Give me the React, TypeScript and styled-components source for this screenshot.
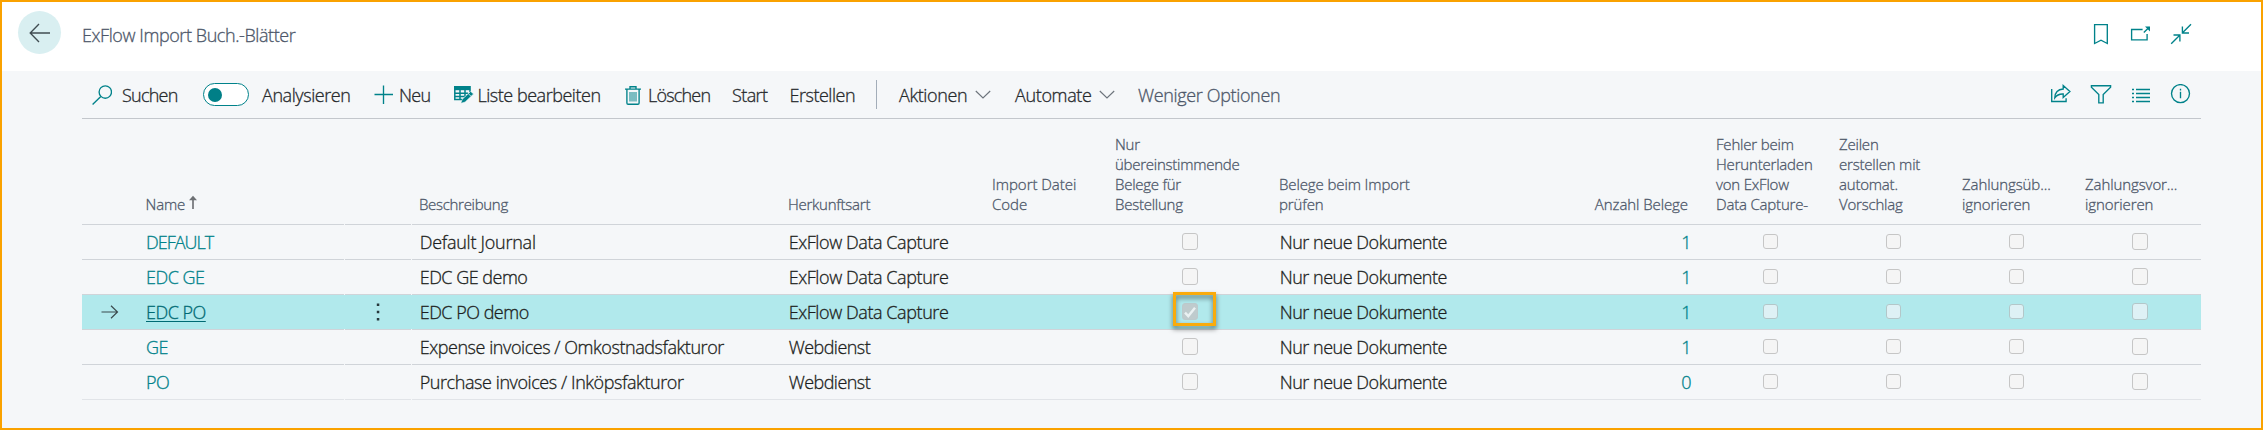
import React from 'react';
import styled, { createGlobalStyle, css } from 'styled-components';

const teal = '#00828a';
const ink = '#1c1e20';
const muted = '#4d5769';
const line = '#d0d4d9';

const GlobalStyle = createGlobalStyle`
  * { box-sizing: border-box; }
  body { margin: 0; background: #f5f7f9; }
`;

const Page = styled.div`
  height: 430px;
  border: 2px solid #faa200;
  background: #f5f7f9;
  font-family: 'Open Sans', 'Noto Sans', sans-serif;
  font-weight: 300;
  font-size: 18px;
  line-height: 34px;
  letter-spacing: -0.42px;
  color: ${ink};
  -webkit-text-stroke: 0.3px currentColor;
  white-space: nowrap;
  overflow: hidden;
`;

const Label = styled.span<{ $track?: number }>`
  ${p => p.$track !== undefined && css`letter-spacing: ${p.$track}px;`}
`;

/* ---------- header ---------- */

const Header = styled.header`
  display: flex;
  align-items: flex-start;
  height: 69px;
  padding: 0 60px 0 16px;
  background: #fff;
`;

const BackButton = styled.div`
  display: flex;
  align-items: center;
  justify-content: center;
  width: 43px;
  height: 43px;
  margin-top: 9px;
  border-radius: 50%;
  background: #d9eff1;
`;

const Title = styled.div`
  margin: 16px auto 0 21px;
  color: ${muted};
`;

const HeaderIcons = styled.div`
  display: flex;
  margin-top: 21px;
`;

const IconSlot = styled.div`
  display: flex;
  justify-content: center;
  width: 40px;
`;

const Icon = styled.svg<{ $color?: string }>`
  display: block;
  flex: none;
  fill: none;
  stroke: ${p => p.$color || teal};
  stroke-width: 1.35;
`;

/* ---------- toolbar ---------- */

const Toolbar = styled.nav`
  display: flex;
  align-items: center;
  height: 48px;
  margin: 0 60px 0 80px;
  padding-left: 10px;
  border-bottom: 1px solid #c3c7cc;
`;

const Command = styled.div<{ $width: number; $gap?: number; $muted?: boolean }>`
  display: flex;
  align-items: center;
  width: ${p => p.$width}px;
  gap: ${p => p.$gap || 0}px;
  color: ${p => (p.$muted ? muted : '#26292c')};
`;

const Toggle = styled.div`
  display: flex;
  align-items: center;
  width: 46px;
  height: 23px;
  padding-left: 4px;
  border: 1px solid ${teal};
  border-radius: 12px;
  background: #fff;
`;

const Knob = styled.div`
  width: 14px;
  height: 14px;
  border-radius: 50%;
  background: #007f87;
`;

const Divider = styled.div`
  width: 1px;
  height: 29px;
  margin-right: 22px;
  background: #a3adb9;
`;

const ToolbarIcons = styled.div`
  display: flex;
  margin-left: auto;
`;

/* ---------- table ---------- */

const columns = css`
  display: grid;
  grid-template-columns: 58px 205px 67px 369px 204px 123px 164px 308px 129px repeat(4, 123px);
`;

const Table = styled.div`
  width: 2119px;
  margin-left: 80px;
`;

const HeadRow = styled.div`
  ${columns}
  height: 106px;
`;

const HeadCell = styled.div<{ $right?: boolean; $notch?: boolean }>`
  display: flex;
  flex-direction: column;
  justify-content: flex-end;
  align-items: ${p => (p.$right ? 'flex-end' : 'flex-start')};
  padding: 0 ${p => (p.$right ? 21 : 0)}px 10px ${p => (p.$notch ? 5.5 : 7)}px;
  margin-right: ${p => (p.$notch ? 1 : 0)}px;
  border-bottom: 1px solid ${line};
  font-size: 15px;
  line-height: 20px;
  letter-spacing: -0.18px;
  color: ${muted};
`;

const SortLabel = styled.span`
  display: flex;
  align-items: flex-start;
  gap: 4px;
`;

const BodyRow = styled.div<{ $selected?: boolean }>`
  ${columns}
  height: 35px;
  ${p => p.$selected && css`background: linear-gradient(#b1e9ec, #b1e9ec) 0 0 / 100% 34px no-repeat;`}
  &:last-child > * { border-bottom-color: #e1e4e8; }
`;

const Cell = styled.div<{ $notch?: boolean; $center?: boolean; $right?: boolean }>`
  position: relative;
  display: flex;
  align-items: center;
  justify-content: ${p => (p.$center ? 'center' : p.$right ? 'flex-end' : 'flex-start')};
  padding: 0 ${p => (p.$right ? 18 : 0)}px 0 ${p => (p.$center || p.$right ? 0 : p.$notch ? 6 : 7.7)}px;
  margin-right: ${p => (p.$notch ? 1 : 0)}px;
  border-bottom: 1px solid ${line};
`;

const RowMarker = styled.div`
  margin-right: 2px;
`;

const Link = styled.span<{ $active?: boolean; $track?: number }>`
  color: ${p => (p.$active ? '#006a73' : teal)};
  ${p => p.$track !== undefined && css`letter-spacing: ${p.$track}px;`}
  ${p => p.$active && css`
    text-decoration: underline;
    text-decoration-thickness: 1px;
    text-underline-offset: 2px;
  `}
`;

const Checkbox = styled.span<{ $large?: boolean; $selected?: boolean; $checked?: boolean }>`
  display: flex;
  align-items: center;
  justify-content: center;
  width: ${p => (p.$large ? 16 : 15)}px;
  height: ${p => (p.$large ? 17 : 15)}px;
  margin-bottom: 1px;
  border: 1px solid ${p => (p.$checked ? '#bccacc' : p.$selected ? '#b3c7c9' : '#c6c6c6')};
  border-radius: 3px;
  background: ${p => (p.$checked ? '#bfcbcd' : p.$selected ? '#def1f5' : '#f5f5f5')};
`;

const Highlight = styled.div`
  position: absolute;
  left: 65px;
  top: -3px;
  width: 43px;
  height: 34px;
  border: 3px solid #f9ab0c;
  filter: drop-shadow(0 3px 2.5px rgba(0, 0, 0, 0.55));
  z-index: 1;
`;

interface JournalRow {
  name: string;
  nameTrack?: number;
  text: string;
  textTrack?: number;
  source: string;
  sourceTrack?: number;
  count: number;
  selected?: boolean;
}

const rows: JournalRow[] = [
  { name: 'DEFAULT', nameTrack: -1, text: 'Default Journal', textTrack: -0.25, source: 'ExFlow Data Capture', count: 1 },
  { name: 'EDC GE', nameTrack: -0.5, text: 'EDC GE demo', textTrack: -0.5, source: 'ExFlow Data Capture', count: 1 },
  { name: 'EDC PO', nameTrack: -0.5, text: 'EDC PO demo', textTrack: -0.5, source: 'ExFlow Data Capture', count: 1, selected: true },
  { name: 'GE', text: 'Expense invoices / Omkostnadsfakturor', textTrack: -0.44, source: 'Webdienst', sourceTrack: -0.55, count: 1 },
  { name: 'PO', text: 'Purchase invoices / Inköpsfakturor', source: 'Webdienst', sourceTrack: -0.55, count: 0 },
];

interface HeadColumn {
  lines: string[];
  track?: number;
  right?: boolean;
}

const headColumns: HeadColumn[] = [
  { lines: ['Beschreibung'], track: -0.3 },
  { lines: ['Herkunftsart'], track: -0.25 },
  { lines: ['Import Datei', 'Code'], track: -0.03 },
  { lines: ['Nur', 'übereinstimmende', 'Belege für', 'Bestellung'], track: -0.25 },
  { lines: ['Belege beim Import', 'prüfen'], track: -0.11 },
  { lines: ['Anzahl Belege'], track: -0.08, right: true },
  { lines: ['Fehler beim', 'Herunterladen', 'von ExFlow', 'Data Capture-'], track: -0.19 },
  { lines: ['Zeilen', 'erstellen mit', 'automat.', 'Vorschlag'], track: -0.2 },
  { lines: ['Zahlungsüb...', 'ignorieren'], track: -0.09 },
  { lines: ['Zahlungsvor...', 'ignorieren'], track: -0.09 },
];

const Chevron = () => (
  <Icon width="16" height="9" viewBox="0 0 16 9" $color="#6d747c"><path d="M.8 1l7.2 7 7.2-7" strokeWidth="1.15" /></Icon>
);

function TopBar() {
  return (
    <Header>
      <BackButton>
        <Icon width="22" height="20" viewBox="0 0 22 20" $color="#414d52"><path d="M21 10H1.5M10 1L1.2 10l8.8 9" /></Icon>
      </BackButton>
      <Title>ExFlow Import Buch.-Blätter</Title>
      <HeaderIcons>
        <IconSlot>
          <Icon width="22" height="22" viewBox="0 0 22 22"><path d="M4.6 1.6h12.7v18.9L11 17.2l-6.4 3.3z" /></Icon>
        </IconSlot>
        <IconSlot>
          <Icon width="22" height="22" viewBox="0 0 22 22">
            <path d="M12.6 6.5H1.6v10.3h15.5V11M13.8 9.6l5.4-5.4" />
            <path d="M15 3.5h5v5z" fill={teal} stroke="none" />
          </Icon>
        </IconSlot>
        <IconSlot>
          <Icon width="22" height="22" viewBox="0 0 22 22">
            <path d="M21 1.3l-8.5 8.5M12.4 3.5V10H19M1.2 20.7L10 12M3.5 12h6.4v6.6" />
          </Icon>
        </IconSlot>
      </HeaderIcons>
    </Header>
  );
}

function ActionBar() {
  return (
    <Toolbar>
      <Command $width={111} $gap={10}>
        <Icon width="20" height="21" viewBox="0 0 20 21"><circle cx="13.3" cy="8" r="6.2" /><path d="M8.8 12.5L.6 20.5" /></Icon>
        <Label $track={-0.75}>Suchen</Label>
      </Command>
      <Command $width={171} $gap={13}>
        <Toggle><Knob /></Toggle>
        <Label>Analysieren</Label>
      </Command>
      <Command $width={80} $gap={5}>
        <Icon width="20" height="21" viewBox="0 0 20 21"><path d="M.5 10.5h18.5M9.5 1.5v18.5" /></Icon>
        <Label $track={-0.7}>Neu</Label>
      </Command>
      <Command $width={171} $gap={3.5}>
        <Icon width="20" height="21" viewBox="0 0 20 21">
          <path d="M0 2h16.8v4.2H0z" fill={teal} stroke="none" />
          <path d="M.8 3v12.6h7.4M16 6v2M6 6v9.3M11 6v6M.8 9.2h13.4M.8 12.4h10" strokeWidth="1.5" />
          <path d="M16.6 7.4l2.9 2.5-8.4 8.1-4.2 1.3 1.4-4z" fill={teal} stroke="#f5f7f9" strokeWidth=".5" />
          <path d="M14.5 9.8l2.3 2.3" stroke="#f5f7f9" strokeWidth=".8" />
        </Icon>
        <Label $track={-0.47}>Liste bearbeiten</Label>
      </Command>
      <Command $width={107} $gap={7}>
        <Icon width="16" height="21" viewBox="0 0 16 21">
          <path d="M0 5.1h16M5 5V2.7h6V5M1.9 5v14q0 1.2 1.2 1.2h9.8q1.2 0 1.2-1.2V5" />
          <path d="M5 8v9.5M7 8v9.5M9 8v9.5M11 8v9.5" strokeWidth="1" />
        </Icon>
        <Label $track={-0.8}>Löschen</Label>
      </Command>
      <Command $width={57.5}><Label $track={-0.6}>Start</Label></Command>
      <Command $width={86.5}><Label $track={-0.48}>Erstellen</Label></Command>
      <Divider />
      <Command $width={116} $gap={7.5}><Label $track={-0.4}>Aktionen</Label><Chevron /></Command>
      <Command $width={123} $gap={7.5}><Label $track={-0.35}>Automate</Label><Chevron /></Command>
      <Command $width={150} $muted><Label $track={-0.35}>Weniger Optionen</Label></Command>
      <ToolbarIcons>
        <IconSlot>
          <Icon width="22" height="21" viewBox="0 0 22 21">
            <path d="M1.7 5v12.5h14.4v-3.2M4.8 13.8C5 8.4 8.5 5.3 13.2 5V1.6l6.7 6-6.7 5.8V10c-3.7-.2-6.4 1-8.4 3.8z" />
          </Icon>
        </IconSlot>
        <IconSlot>
          <Icon width="22" height="21" viewBox="0 0 22 21"><path d="M1.4 1.7h19.2v1.6l-7.4 7.3v8.2H8.8v-8.2L1.4 3.3z" /></Icon>
        </IconSlot>
        <IconSlot>
          <Icon width="22" height="21" viewBox="0 0 22 21">
            <path d="M2 5.5h2M6 5.5h14M2 9.5h2M6 9.5h14M2 13.5h2M6 13.5h14M2 17.5h2M6 17.5h14" />
          </Icon>
        </IconSlot>
        <IconSlot>
          <Icon width="22" height="21" viewBox="0 0 22 21">
            <circle cx="10.5" cy="9.6" r="9" />
            <path d="M10.5 7.8v6.4M10.5 4.8v1.6" />
          </Icon>
        </IconSlot>
      </ToolbarIcons>
    </Toolbar>
  );
}

function JournalLine({ row }: { row: JournalRow }) {
  const { selected } = row;
  return (
    <BodyRow $selected={selected}>
      <Cell $center>
        {selected && (
          <RowMarker>
            <Icon width="18" height="14" viewBox="0 0 18 14" $color="#3b4a4d"><path d="M.5 7h16M10 .7L16.5 7 10 13.3" strokeWidth="1.2" /></Icon>
          </RowMarker>
        )}
      </Cell>
      <Cell $notch>
        <Link $active={selected} $track={row.nameTrack}>{row.name}</Link>
      </Cell>
      <Cell $notch $center>
        {selected && (
          <Icon width="4" height="18" viewBox="0 0 4 18"><path d="M.8.6h2.5v2.5H.8zM.8 7.8h2.5v2.5H.8zM.8 15h2.5v2.5H.8z" fill="#27393c" stroke="none" /></Icon>
        )}
      </Cell>
      <Cell><Label $track={row.textTrack}>{row.text}</Label></Cell>
      <Cell><Label $track={row.sourceTrack}>{row.source}</Label></Cell>
      <Cell />
      <Cell $center>
        <Checkbox $large $selected={selected} $checked={selected}>
          {selected && (
            <Icon width="14" height="14" viewBox="0 0 14 14" $color="#eaf1f2"><path d="M2 7.6l3.3 3.5L12 2.8" strokeWidth="2.4" /></Icon>
          )}
        </Checkbox>
        {selected && <Highlight />}
      </Cell>
      <Cell><Label $track={-0.48}>Nur neue Dokumente</Label></Cell>
      <Cell $right><Link>{row.count}</Link></Cell>
      {[0, 1, 2, 3].map(i => (
        <Cell key={i} $center><Checkbox $large={i === 3} $selected={selected} /></Cell>
      ))}
    </BodyRow>
  );
}

export default function App() {
  return (
    <>
      <GlobalStyle />
      <Page>
        <TopBar />
        <ActionBar />
        <Table>
          <HeadRow>
            <HeadCell />
            <HeadCell $notch>
              <SortLabel>
                Name
                <Icon width="8" height="15" viewBox="0 0 8 15" $color="#85878b">
                  <path d="M4 15V4" strokeWidth="2" />
                  <path d="M0 6.3L4 1.8l4 4.5z" fill="#6d7074" stroke="none" />
                </Icon>
              </SortLabel>
            </HeadCell>
            <HeadCell $notch />
            {headColumns.map(col => (
              <HeadCell key={col.lines[0]} $right={col.right}>
                {col.lines.map(text => <Label key={text} $track={col.track}>{text}</Label>)}
              </HeadCell>
            ))}
          </HeadRow>
          {rows.map(row => <JournalLine key={row.name} row={row} />)}
        </Table>
      </Page>
    </>
  );
}
